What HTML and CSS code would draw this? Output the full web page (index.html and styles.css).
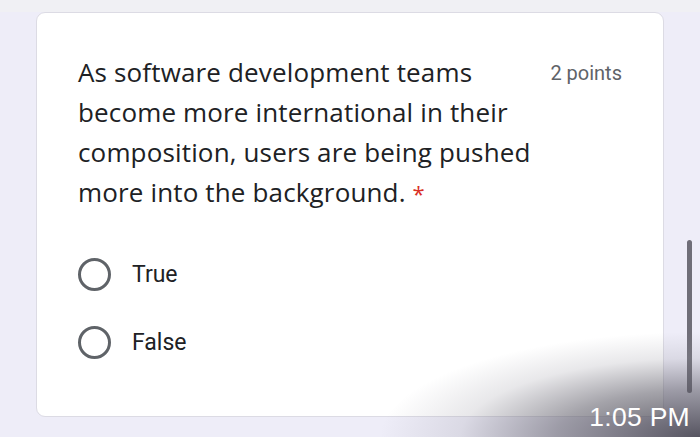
FILE: index.html
```html
<!DOCTYPE html>
<html>
<head>
<meta charset="utf-8">
<link rel="stylesheet" href="styles.css">
</head>
<body>
<div class="page">
  <div class="card">
    <div class="head">
      <div class="question">As software development teams<br>become more international in their<br>composition, users are being pushed<br>more into the background. <span class="req">*</span></div>
      <div class="points">2 points</div>
    </div>
    <div class="options">
      <div class="option"><span class="radio"></span><span class="label">True</span></div>
      <div class="option"><span class="radio"></span><span class="label">False</span></div>
    </div>
  </div>
</div>
<div class="scrollbar"></div>
<div class="shade"></div>
<div class="time">1:05 PM</div>
</body>
</html>
```
FILE: styles.css
```css
html, body {
  margin: 0;
  padding: 0;
  width: 700px;
  height: 437px;
  overflow: hidden;
  background: #eeedf8;
}
body {
  position: relative;
  background: linear-gradient(#f0f0f4 0, #f0f0f4 12px, #eeedf8 12px);
}
.page {
  padding: 12px 36px 0 36px;
}
.card {
  width: 628px;
  height: 405px;
  box-sizing: border-box;
  background: #ffffff;
  border: 1px solid #dcdbe4;
  border-radius: 9px;
  padding: 39px 41px 0 41px;
}
.head {
  display: flex;
  justify-content: space-between;
  align-items: flex-start;
}
.question {
  white-space: nowrap;
  font-family: "Open Sans", sans-serif;
  font-size: 26px;
  line-height: 40px;
  color: #202124;
  letter-spacing: 0.15px;
}
.req {
  color: #d93025;
  font-size: 22px;
}
.points {
  font-family: Roboto, sans-serif;
  font-size: 20px;
  color: #5f6368;
  line-height: 24px;
  margin-top: 9px;
}
.options {
  margin-top: 45px;
  display: flex;
  flex-direction: column;
  gap: 35px;
}
.option {
  display: flex;
  align-items: center;
  height: 33px;
}
.radio {
  width: 27px;
  height: 27px;
  border: 3px solid #5f6368;
  border-radius: 50%;
}
.label {
  font-family: Roboto, sans-serif;
  font-size: 23px;
  color: #202124;
  margin-left: 21px;
}
.scrollbar {
  position: absolute;
  left: 687px;
  top: 240px;
  width: 5px;
  height: 153px;
  border-radius: 3px;
  background: #6f6e78;
}
.shade {
  position: absolute;
  left: 0;
  top: 0;
  width: 700px;
  height: 437px;
  pointer-events: none;
  background: radial-gradient(ellipse 320px 105px at 700px 437px, rgba(60,58,70,0.85) 0%, rgba(90,88,100,0.55) 45%, rgba(140,138,150,0.2) 75%, rgba(255,255,255,0) 100%);
}
.time {
  position: absolute;
  right: 10px;
  bottom: 4px;
  font-family: "Liberation Sans", Arial, sans-serif;
  font-size: 26.5px;
  color: #ffffff;
  letter-spacing: 0.3px;
}
```
